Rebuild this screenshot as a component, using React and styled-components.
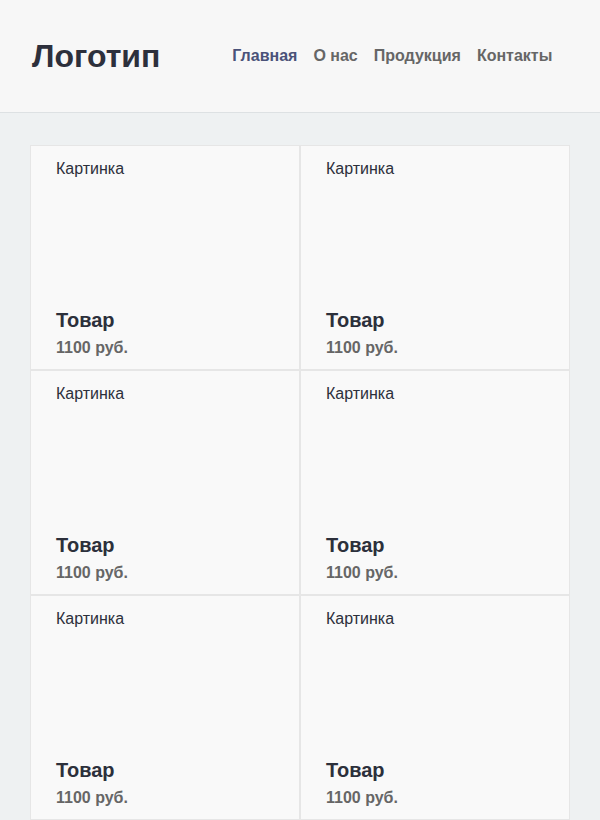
import React from 'react';
import styled, { createGlobalStyle } from 'styled-components';

const GlobalStyle = createGlobalStyle`
  body {
    margin: 0;
    background: #eef1f2;
    font-family: "Liberation Sans", Arial, sans-serif;
    color: #2c303b;
  }
`;

const Header = styled.header`
  display: flex;
  align-items: center;
  height: 112px;
  padding: 0 32px;
  background: #f7f7f7;
  border-bottom: 1px solid #dde1e3;
`;

const Logo = styled.div`
  font-size: 32px;
  font-weight: 700;
  color: #2d303c;
  margin-right: 72px;
`;

const Nav = styled.nav`
  display: flex;
  gap: 16px;
`;

const NavLink = styled.a`
  font-size: 16px;
  font-weight: 700;
  text-decoration: none;
  color: ${(props) => (props.active ? '#4a5279' : '#666666')};
  cursor: pointer;
`;

const Main = styled.main`
  padding: 32px 30px 0;
`;

const Grid = styled.div`
  display: grid;
  grid-template-columns: repeat(2, 270px);
`;

const Card = styled.div`
  display: flex;
  flex-direction: column;
  height: 225px;
  box-sizing: border-box;
  padding: 14px 25px 12px;
  background: #f9f9f9;
  border: 1px solid #e6e6e6;
`;

const Picture = styled.div`
  flex: 1;
  font-size: 16px;
  line-height: 18px;
  color: #2c303b;
`;

const Title = styled.div`
  font-size: 20px;
  line-height: 24px;
  font-weight: 700;
  color: #2c303b;
`;

const Price = styled.div`
  margin-top: 7px;
  font-size: 16px;
  line-height: 18px;
  font-weight: 700;
  color: #666666;
`;

const links = ['Главная', 'О нас', 'Продукция', 'Контакты'];
const products = Array.from({ length: 6 }, () => ({ title: 'Товар', price: '1100 руб.' }));

const App = () => (
  <>
    <GlobalStyle />
    <Header>
      <Logo>Логотип</Logo>
      <Nav>
        {links.map((link, index) => (
          <NavLink key={link} active={index === 0}>
            {link}
          </NavLink>
        ))}
      </Nav>
    </Header>
    <Main>
      <Grid>
        {products.map((item, index) => (
          <Card key={index}>
            <Picture>Картинка</Picture>
            <Title>{item.title}</Title>
            <Price>{item.price}</Price>
          </Card>
        ))}
      </Grid>
    </Main>
  </>
);

export default App;
